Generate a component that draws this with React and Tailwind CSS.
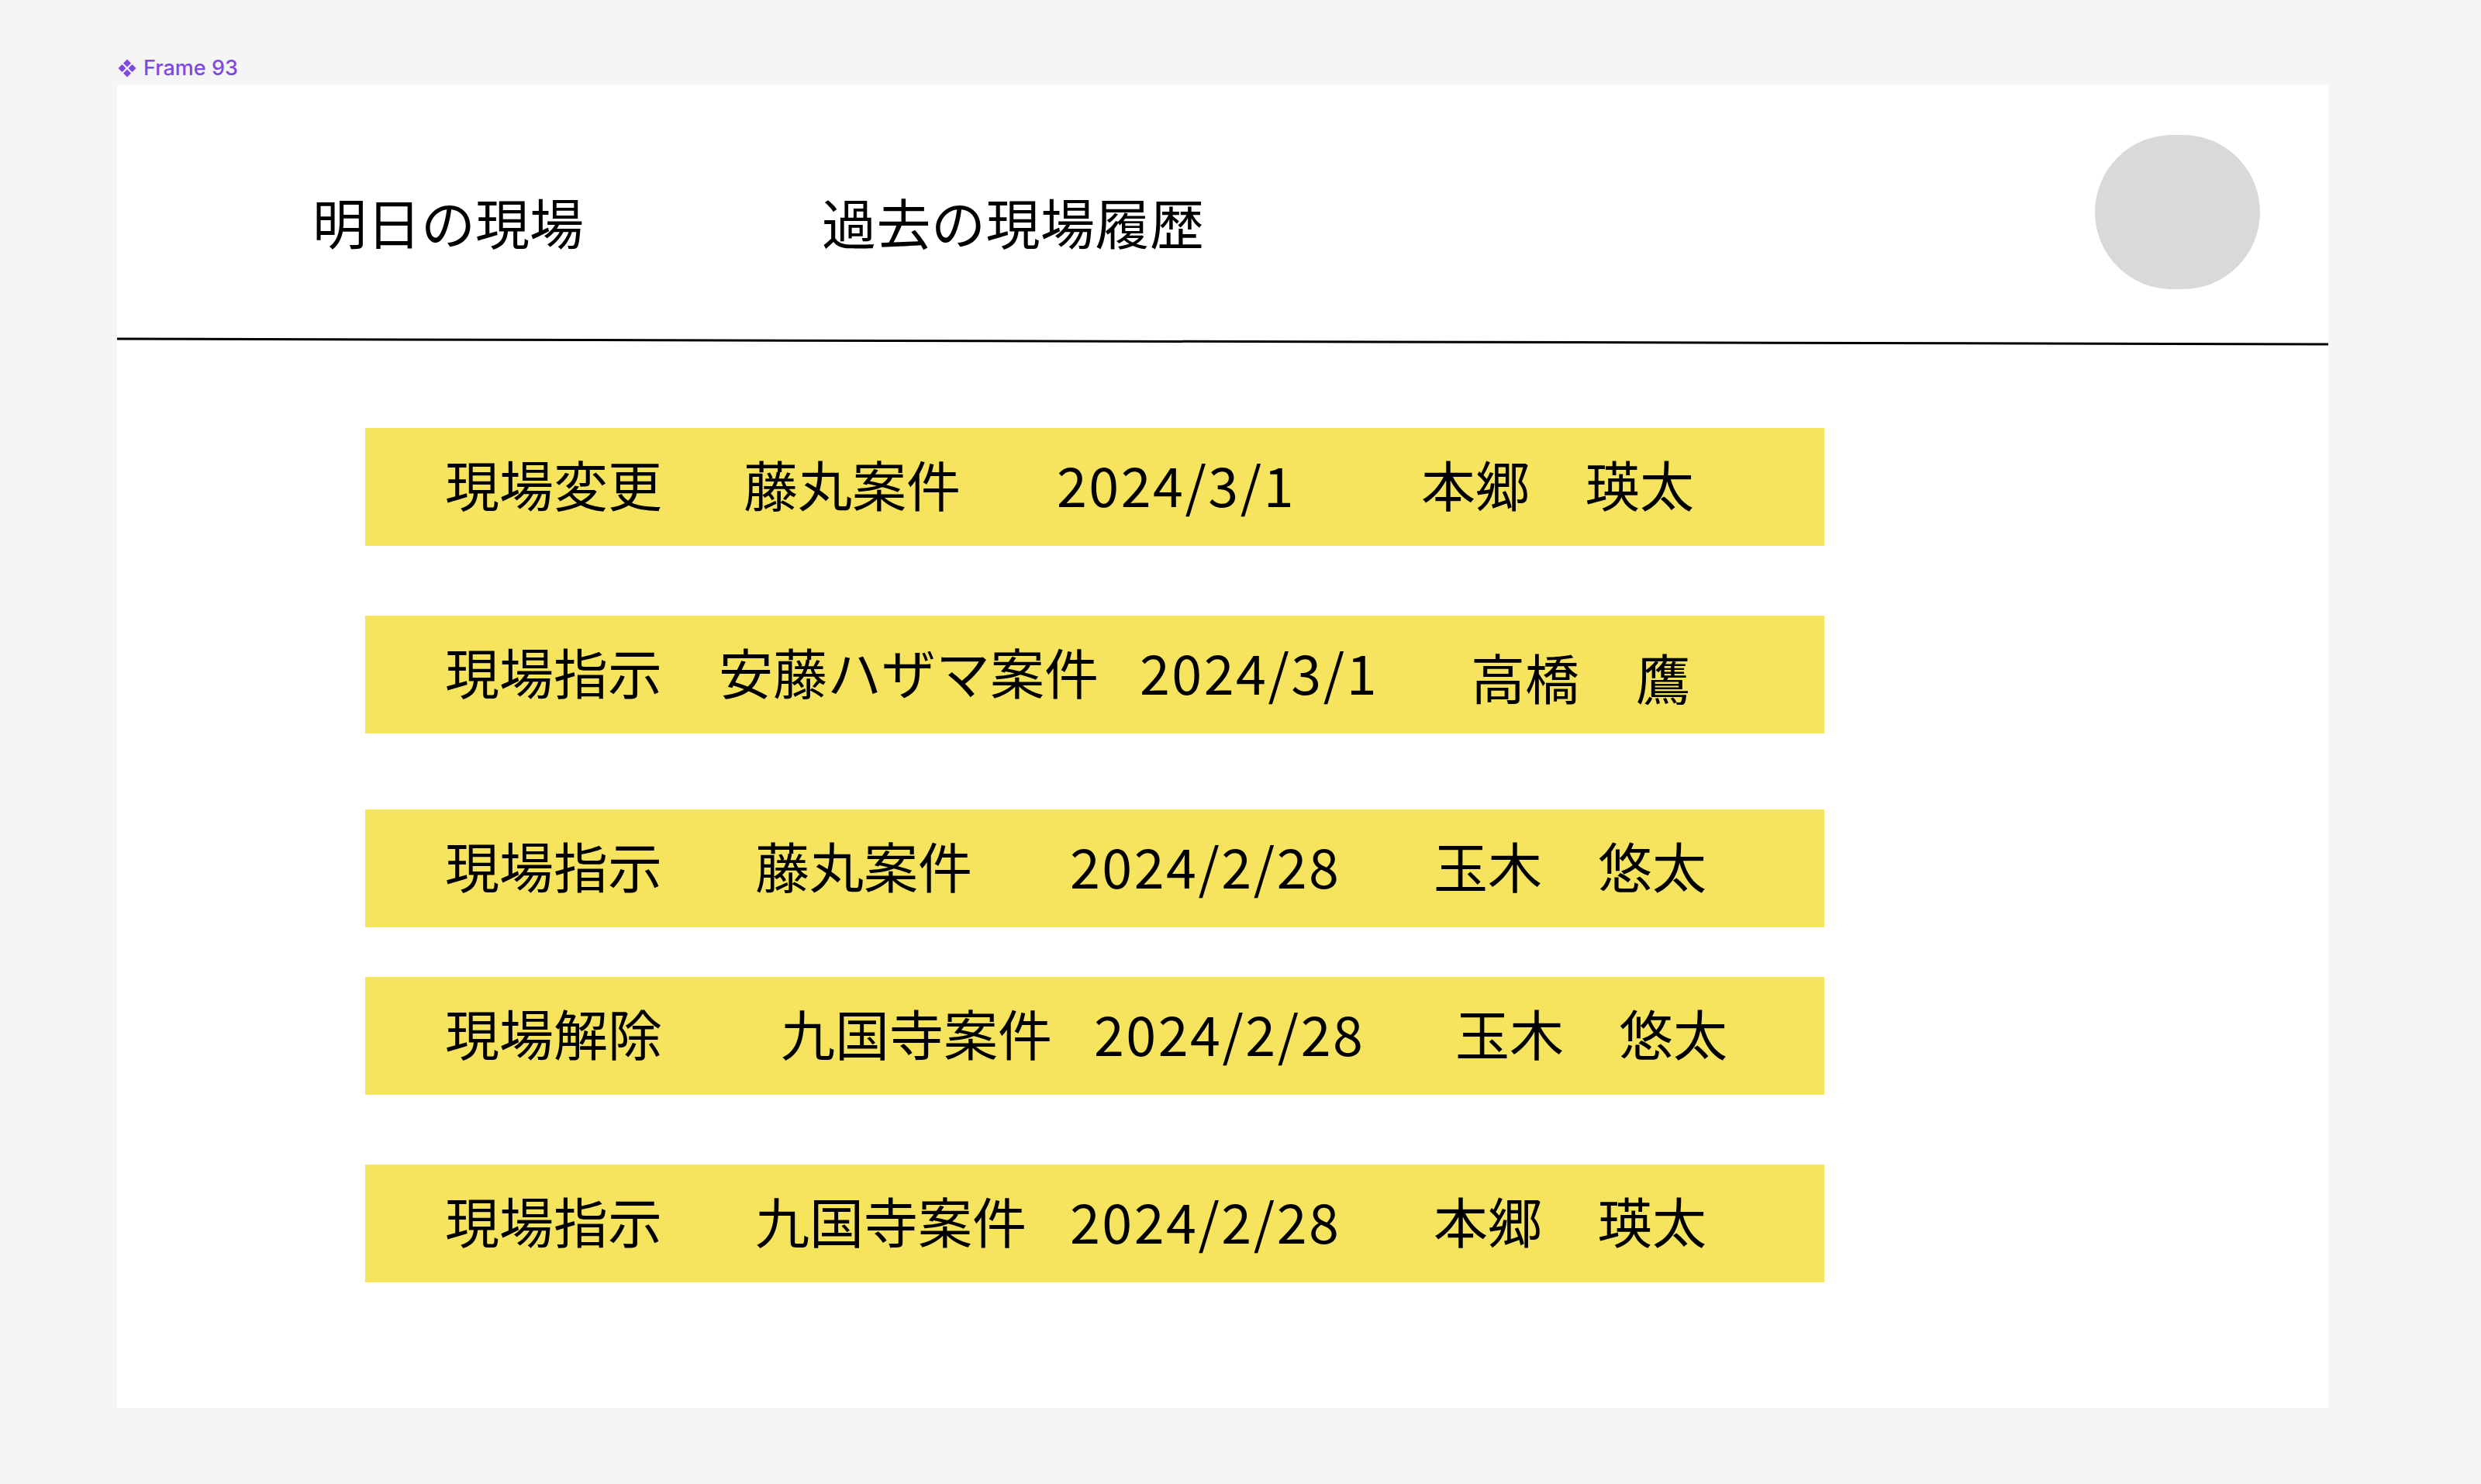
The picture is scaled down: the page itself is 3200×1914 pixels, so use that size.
import React from 'react';

const rows = [
    {
        lower: false,
        cells: [
            ['現場変更', 'w-[385px]'],
            ['藤丸案件', 'w-[404px]'],
            ['2024/3/1', 'w-[470px]'],
            ['本郷', 'w-[212px]'],
            ['瑛太', ''],
        ],
        gap: 'mt-0',
    },
    {
        lower: true,
        cells: [
            ['現場指示', 'w-[353px]'],
            ['安藤ハザマ案件', 'w-[543px]'],
            ['2024/3/1', 'w-[427px]'],
            ['高橋', 'w-[213px]'],
            ['鷹', ''],
        ],
        gap: 'mt-[90px]',
    },
    {
        lower: false,
        cells: [
            ['現場指示', 'w-[400px]'],
            ['藤丸案件', 'w-[406px]'],
            ['2024/2/28', 'w-[469px]'],
            ['玉木', 'w-[212px]'],
            ['悠太', ''],
        ],
        gap: 'mt-[98px]',
    },
    {
        lower: false,
        cells: [
            ['現場解除', 'w-[433px]'],
            ['九国寺案件', 'w-[404px]'],
            ['2024/2/28', 'w-[466px]'],
            ['玉木', 'w-[211px]'],
            ['悠太', ''],
        ],
        gap: 'mt-[64px]',
    },
    {
        lower: false,
        cells: [
            ['現場指示', 'w-[400px]'],
            ['九国寺案件', 'w-[406px]'],
            ['2024/2/28', 'w-[469px]'],
            ['本郷', 'w-[212px]'],
            ['瑛太', ''],
        ],
        gap: 'mt-[90px]',
    },
];

const ComponentIcon = () => (
    <svg width="26" height="26" viewBox="0 0 26 26" fill="#8048e0">
        <path d="M13 1.5 L18 6.5 L13 11.5 L8 6.5 Z" />
        <path d="M6.5 8 L11.5 13 L6.5 18 L1.5 13 Z" />
        <path d="M19.5 8 L24.5 13 L19.5 18 L14.5 13 Z" />
        <path d="M13 14.5 L18 19.5 L13 24.5 L8 19.5 Z" />
    </svg>
);

const SiteRow = ({ row }) => (
    <div className={`${row.gap} ml-[320px] w-[1882px] h-[152px] bg-[#f6e45f] flex items-center pl-[103px] pb-[8px]`}>
        {row.cells.map(([text, width], i) => (
            <span
                key={i}
                className={`${width} shrink-0 whitespace-nowrap text-[70px] leading-[70px] text-black ${i === 2 ? 'tracking-[2.5px]' : ''} ${row.lower && i >= 3 ? 'pt-[14px]' : ''}`}
            >
                {text}
            </span>
        ))}
    </div>
);

export default function App() {
    return (
        <div className="min-h-screen w-full bg-[#f5f5f5] pt-[74px] pl-[151px] font-['Noto_Sans_CJK_JP','Noto_Sans',sans-serif]">
            {/* Frame label */}
            <div className="flex items-center gap-[8px] h-[27px]">
                <ComponentIcon />
                <span className="font-['Inter',sans-serif] font-medium text-[27px] leading-[27px] text-[#8048e0]">Frame 93</span>
            </div>

            <div className="mt-[8px] w-[2852px] h-[1707px] bg-white flex flex-col">
                {/* Header */}
                <div className="h-[330px] flex items-start">
                    <div className="mt-[142px] ml-[252px] flex">
                        <span className="w-[657px] text-[70px] leading-[70px] text-black whitespace-nowrap">明日の現場</span>
                        <span className="text-[70px] leading-[70px] text-black whitespace-nowrap tracking-[0.5px]">過去の現場履歴</span>
                    </div>
                    <div className="ml-auto mr-[88px] mt-[65px] w-[213px] h-[199px] rounded-full bg-[#d9d9d9]" />
                </div>
                <div className="h-[3px] w-full bg-black rotate-[0.14deg]" />

                {/* Site list */}
                <div className="pt-[110px] flex flex-col">
                    {rows.map((row, i) => (
                        <SiteRow key={i} row={row} />
                    ))}
                </div>
            </div>
        </div>
    );
}
